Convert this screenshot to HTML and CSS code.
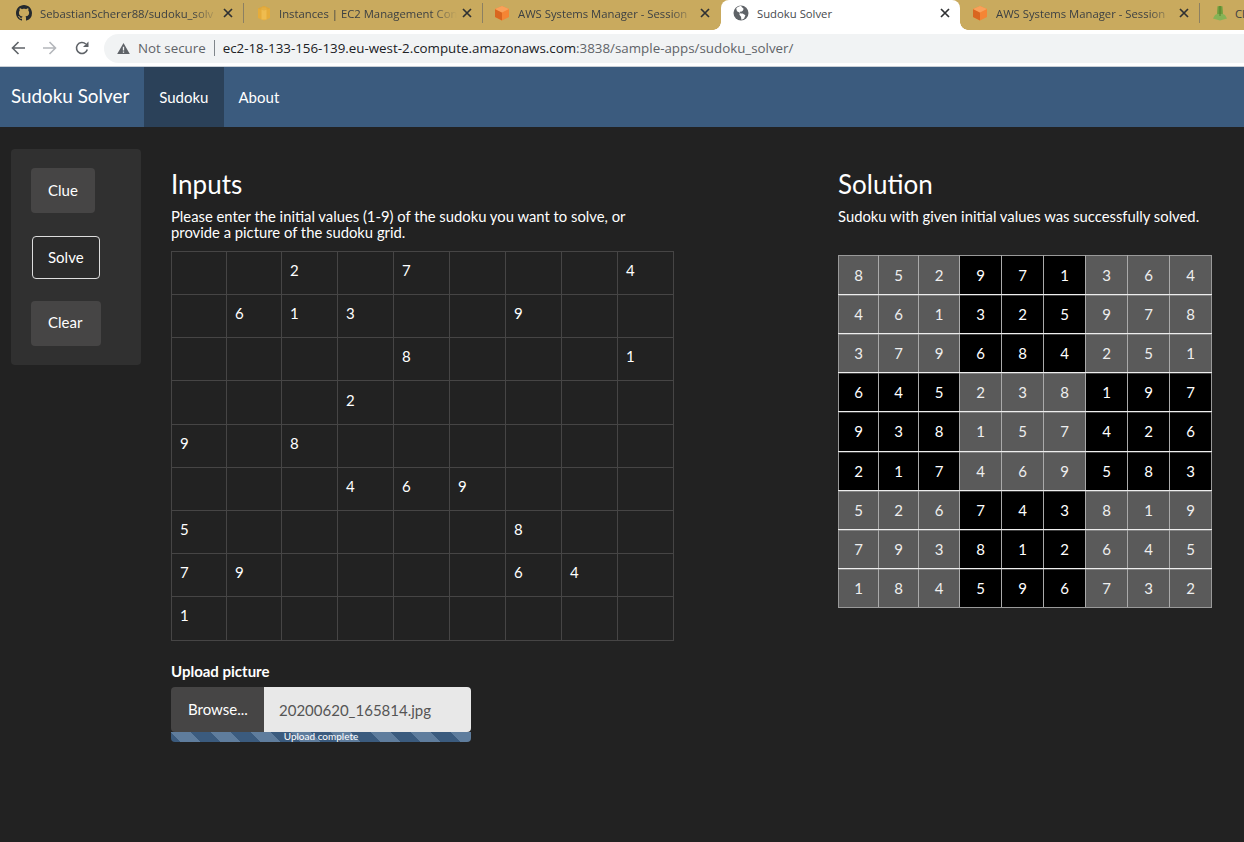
FILE: index.html
```html
<!DOCTYPE html>
<html lang="en">
<head>
    <meta charset="UTF-8">
    <title>Sudoku Solver</title>
    <link rel="stylesheet" href="styles.css">
</head>
<body>
    <div class="tabstrip">
        <div class="tab tab-first">
            <svg class="favicon" viewBox="0 0 16 16"><path fill="#24292e" d="M8 0C3.58 0 0 3.58 0 8c0 3.54 2.29 6.53 5.47 7.59.4.07.55-.17.55-.38 0-.19-.01-.82-.01-1.49-2.01.37-2.53-.49-2.69-.94-.09-.23-.48-.94-.82-1.13-.28-.15-.68-.52-.01-.53.63-.01 1.08.58 1.23.82.72 1.21 1.87.87 2.33.66.07-.52.28-.87.51-1.07-1.78-.2-3.64-.89-3.64-3.95 0-.87.31-1.59.82-2.15-.08-.2-.36-1.02.08-2.12 0 0 .67-.21 2.2.82.64-.18 1.32-.27 2-.27s1.36.09 2 .27c1.53-1.04 2.2-.82 2.2-.82.44 1.1.16 1.92.08 2.12.51.56.82 1.27.82 2.15 0 3.07-1.87 3.75-3.65 3.95.29.25.54.73.54 1.48 0 1.07-.01 1.93-.01 2.2 0 .21.15.46.55.38A8.01 8.01 0 0 0 16 8c0-4.42-3.58-8-8-8z"/></svg>
            <span class="tab-title">SebastianScherer88/sudoku_solv</span>
            <svg class="tab-close" viewBox="0 0 10 10"><path d="M1 1l8 8M9 1L1 9"/></svg>
        </div>
        <div class="tab tab-second">
            <svg class="favicon" viewBox="0 0 16 16"><path fill="#e6ac3a" d="M2 3.500 8 1l6 2.500V13l-6 2.500L2 13z"/><path fill="#efbc4f" d="M5.500 2.500h5v12h-5z"/><path fill="#d9a238" d="M2 3.500 8 5.500l6-2-6-2.500z" opacity=".5"/></svg>
            <span class="tab-title">Instances | EC2 Management Con</span>
            <svg class="tab-close" viewBox="0 0 10 10"><path d="M1 1l8 8M9 1L1 9"/></svg>
        </div>
        <div class="tab tab-before-active">
            <svg class="favicon" viewBox="0 0 16 16"><path fill="#f58534" d="M8 1 15 4v8l-7 3.500L1 12V4z"/><path fill="#d9661f" d="M8 7.500v8L1 12V4z"/><path fill="#f9a15a" d="M8 1 15 4 8 7.500 1 4z"/></svg>
            <span class="tab-title">AWS Systems Manager - Session</span>
            <svg class="tab-close" viewBox="0 0 10 10"><path d="M1 1l8 8M9 1L1 9"/></svg>
        </div>
        <div class="tab tab-active">
            <svg class="favicon" viewBox="0 0 16 16"><circle cx="8" cy="8" r="7.500" fill="#5f6368"/><path fill="#fff" d="M8 .8c-2 .4-3.600 1.300-4.800 2.800l.8 2.600 2.800 1.600-.4 2 1.600 2 .4 3c1-.1 2-.6 2.700-1.200l1.300-3.400-2.800-1.600-2.200-.2-.6-1.600 2-.4 1.200-.8.600-1.800L8.800 2z"/></svg>
            <span class="tab-title">Sudoku Solver</span>
            <svg class="tab-close" viewBox="0 0 10 10"><path d="M1 1l8 8M9 1L1 9"/></svg>
        </div>
        <div class="tab tab-after-active">
            <svg class="favicon" viewBox="0 0 16 16"><path fill="#f58534" d="M8 1 15 4v8l-7 3.500L1 12V4z"/><path fill="#d9661f" d="M8 7.500v8L1 12V4z"/><path fill="#f9a15a" d="M8 1 15 4 8 7.500 1 4z"/></svg>
            <span class="tab-title">AWS Systems Manager - Session</span>
            <svg class="tab-close" viewBox="0 0 10 10"><path d="M1 1l8 8M9 1L1 9"/></svg>
        </div>
        <div class="tab tab-last">
            <svg class="favicon" viewBox="0 0 16 16"><path fill="#6f9f3e" d="M5.500 1.500C6 .8 10 .8 10.500 1.500L11 11H5z"/><path fill="#86b356" d="M3 10l2-1h6l2 1 2 3.500-7 2-7-2z"/><path fill="#547f2c" d="M7 1h2v10H7z" opacity=".5"/></svg>
            <span class="tab-title tab-title-plain">Cl</span>
        </div>
    </div>

    <div class="toolbar">
        <svg class="tool-icon" viewBox="0 0 14 14"><path fill="none" stroke="#5f6368" stroke-width="1.600" d="M14 7H1.500M7.500 1 1.500 7l6 6"/></svg>
        <svg class="tool-icon" viewBox="0 0 14 14"><path fill="none" stroke="#b4b7bb" stroke-width="1.600" d="M0 7h12.500M6.500 1l6 6-6 6"/></svg>
        <svg class="tool-icon" viewBox="0 0 14 14"><path fill="none" stroke="#5f6368" stroke-width="1.600" d="M12.300 8.500A5.500 5.500 0 1 1 10.800 3"/><path fill="#5f6368" d="M13.500 .5V6H8z"/></svg>
        <div class="omnibox">
            <svg class="warn-icon" viewBox="0 0 14 14"><path fill="#5f6368" fill-rule="evenodd" d="M7 1 13.800 13H.2zM6.300 5.200v4h1.400v-4zm0 4.900v1.400h1.400v-1.400z"/></svg>
            <span class="not-secure">Not secure</span>
            <span class="omni-sep"></span>
            <span class="url">ec2-18-133-156-139.eu-west-2.compute.amazonaws.com<span class="url-rest">:3838/sample-apps/sudoku_solver/</span></span>
        </div>
    </div>

    <nav class="navbar">
        <a class="brand">Sudoku Solver</a>
        <a class="nav-item active">Sudoku</a>
        <a class="nav-item">About</a>
    </nav>

    <div class="page">
        <aside class="well">
            <button class="btn">Clue</button>
            <button class="btn btn-focus">Solve</button>
            <button class="btn btn-clear">Clear</button>
        </aside>

        <section class="inputs">
            <h3>Inputs</h3>
            <p class="lead">Please enter the initial values (1-9) of the sudoku you want to solve, or provide a picture of the sudoku grid.</p>
            <table class="grid">
                <colgroup><col class="c55"><col class="c55"><col class="c56"><col class="c56"><col class="c56"><col class="c56"><col class="c56"><col class="c56"><col class="c56"></colgroup>
                <tr><td></td><td></td><td>2</td><td></td><td>7</td><td></td><td></td><td></td><td>4</td></tr>
                <tr><td></td><td>6</td><td>1</td><td>3</td><td></td><td></td><td>9</td><td></td><td></td></tr>
                <tr><td></td><td></td><td></td><td></td><td>8</td><td></td><td></td><td></td><td>1</td></tr>
                <tr><td></td><td></td><td></td><td>2</td><td></td><td></td><td></td><td></td><td></td></tr>
                <tr><td>9</td><td></td><td>8</td><td></td><td></td><td></td><td></td><td></td><td></td></tr>
                <tr><td></td><td></td><td></td><td>4</td><td>6</td><td>9</td><td></td><td></td><td></td></tr>
                <tr><td>5</td><td></td><td></td><td></td><td></td><td></td><td>8</td><td></td><td></td></tr>
                <tr><td>7</td><td>9</td><td></td><td></td><td></td><td></td><td>6</td><td>4</td><td></td></tr>
                <tr><td>1</td><td></td><td></td><td></td><td></td><td></td><td></td><td></td><td></td></tr>
            </table>
            <label class="upload-label">Upload picture</label>
            <div class="file-input">
                <span class="browse">Browse...</span>
                <span class="file-name">20200620_165814.jpg</span>
            </div>
            <div class="progress"><span>Upload complete</span></div>
        </section>

        <section class="solution">
            <h3>Solution</h3>
            <p class="lead">Sudoku with given initial values was successfully solved.</p>
            <table class="solved">
                <colgroup><col class="s40"><col class="s40"><col class="s41"><col class="s42"><col class="s42"><col class="s42"><col class="s42"><col class="s42"><col class="s42"></colgroup>
                <tr><td class="g">8</td><td class="g">5</td><td class="g">2</td><td>9</td><td>7</td><td>1</td><td class="g">3</td><td class="g">6</td><td class="g">4</td></tr>
                <tr><td class="g">4</td><td class="g">6</td><td class="g">1</td><td>3</td><td>2</td><td>5</td><td class="g">9</td><td class="g">7</td><td class="g">8</td></tr>
                <tr><td class="g">3</td><td class="g">7</td><td class="g">9</td><td>6</td><td>8</td><td>4</td><td class="g">2</td><td class="g">5</td><td class="g">1</td></tr>
                <tr><td>6</td><td>4</td><td>5</td><td class="g">2</td><td class="g">3</td><td class="g">8</td><td>1</td><td>9</td><td>7</td></tr>
                <tr><td>9</td><td>3</td><td>8</td><td class="g">1</td><td class="g">5</td><td class="g">7</td><td>4</td><td>2</td><td>6</td></tr>
                <tr><td>2</td><td>1</td><td>7</td><td class="g">4</td><td class="g">6</td><td class="g">9</td><td>5</td><td>8</td><td>3</td></tr>
                <tr><td class="g">5</td><td class="g">2</td><td class="g">6</td><td>7</td><td>4</td><td>3</td><td class="g">8</td><td class="g">1</td><td class="g">9</td></tr>
                <tr><td class="g">7</td><td class="g">9</td><td class="g">3</td><td>8</td><td>1</td><td>2</td><td class="g">6</td><td class="g">4</td><td class="g">5</td></tr>
                <tr><td class="g">1</td><td class="g">8</td><td class="g">4</td><td>5</td><td>9</td><td>6</td><td class="g">7</td><td class="g">3</td><td class="g">2</td></tr>
            </table>
        </section>
    </div>
</body>
</html>
```

FILE: styles.css
```css
html, body {
    height: 100%;
}

body {
    margin: 0;
    height: 842px;
    overflow: hidden;
    background-color: #222;
    color: #fff;
    font-family: Lato, sans-serif;
    font-size: 15px;
}

/* browser chrome */
.tabstrip {
    display: flex;
    height: 30px;
    background-color: #c9aa5e;
    font-family: "Open Sans", sans-serif;
    font-size: 11.3px;
    color: #3c4043;
}

.tab {
    display: flex;
    align-items: center;
    flex: 0 0 239px;
    min-width: 0;
    box-sizing: border-box;
    height: 30px;
    padding: 0 8px 4px 12px;
    position: relative;
}

/* separator between two inactive tabs */
.tab::after {
    content: "";
    position: absolute;
    right: 0;
    top: 3px;
    width: 1px;
    height: 20px;
    background-color: #8c8062;
}

.tab-first {
    flex-basis: 244px;
    padding-left: 16px;
}

.tab-before-active {
    flex-basis: 238px;
    padding-left: 11px;
}

.tab-active {
    background-color: #fff;
    border-radius: 8px 8px 0 0;
    color: #45494d;
    padding-right: 7px;
}

.tab-after-active {
    flex-basis: 240px;
}

.tab-last {
    flex: 1 1 0;
    padding-right: 0;
}

.tab-before-active::after,
.tab-last::after {
    display: none;
}

/* flared bottom corners of the active tab */
.tab-active::before,
.tab-active::after {
    content: "";
    position: absolute;
    top: auto;
    bottom: 0;
    width: 8px;
    height: 8px;
    background-color: transparent;
}

.tab-active::before {
    left: -8px;
    background-image: radial-gradient(circle at 0 0, transparent 7.5px, #fff 8px);
}

.tab-active::after {
    right: -8px;
    background-image: radial-gradient(circle at 100% 0, transparent 7.5px, #fff 8px);
}

.favicon {
    flex: none;
    width: 16px;
    height: 16px;
    margin-right: 8px;
}

.tab-second .favicon,
.tab-last .favicon {
    margin-right: 7px;
}

.tab-title {
    flex: 1 1 0;
    min-width: 0;
    white-space: nowrap;
    -webkit-mask-image: linear-gradient(to right, #000 86%, transparent 100%);
    mask-image: linear-gradient(to right, #000 86%, transparent 100%);
}

.tab-active .tab-title,
.tab-title-plain {
    -webkit-mask-image: none;
    mask-image: none;
}

.tab-close {
    flex: none;
    width: 10px;
    height: 10px;
    margin: 0 3px 0 5px;
    fill: none;
    stroke: #2f3133;
    stroke-width: 1.700;
}

.toolbar {
    display: flex;
    align-items: center;
    height: 36px;
    box-sizing: content-box;
    background-color: #fff;
    border-bottom: 1px solid #c9cfd6;
    padding-left: 11px;
}

.tool-icon {
    flex: none;
    width: 14px;
    height: 14px;
    margin-right: 18px;
}

.omnibox {
    display: flex;
    align-items: center;
    flex: 1;
    height: 29px;
    margin-left: -3px;
    padding-left: 13px;
    background-color: #f1f3f4;
    border-radius: 15px 0 0 15px;
    font-family: "Open Sans", sans-serif;
    font-size: 13.35px;
}

.warn-icon {
    width: 13px;
    height: 13px;
    margin-right: 8px;
}

.not-secure {
    color: #5f6368;
}

.omni-sep {
    width: 1px;
    height: 16px;
    margin: 0 8px;
    background-color: #80868b;
}

.url {
    color: #202124;
    white-space: nowrap;
}

.url-rest {
    color: #5f6368;
}

/* navbar */
.navbar {
    display: flex;
    align-items: stretch;
    height: 60px;
    background-color: #3b5b7e;
}

.brand {
    padding: 0 15px 0 11px;
    font-size: 18.85px;
    line-height: 58px;
}

.nav-item {
    padding: 0 15px;
    font-size: 15px;
    line-height: 60px;
}

.nav-item.active {
    background-color: #2b4159;
}

/* page */
.page {
    display: flex;
    align-items: flex-start;
    padding: 22px 0 0 11px;
}

.well {
    display: flex;
    flex-direction: column;
    align-items: flex-start;
    box-sizing: border-box;
    flex: none;
    width: 130px;
    height: 216px;
    padding: 19px 20px;
    background-color: #303030;
    border-radius: 4px;
}

.btn {
    height: 45px;
    padding: 0 17px 2px;
    margin-bottom: 23px;
    background-color: #464545;
    border: none;
    border-radius: 4px;
    color: #fff;
    font-family: Lato, sans-serif;
    font-size: 15px;
}

.btn-focus {
    height: 43px;
    margin-left: 1px;
    margin-bottom: 21.500px;
    padding: 0 15px 2px;
    background-color: #2b2b2b;
    border: 1px solid #ddd;
}

.btn-clear {
    margin-bottom: 0;
    padding-right: 19px;
}

h3 {
    margin: 20px 0 0;
    font-size: 26px;
    font-weight: 400;
    line-height: 31px;
}

.lead {
    margin: 8px 0 0;
    font-size: 14.8px;
    line-height: 16px;
}

.inputs {
    flex: none;
    width: 503px;
    margin-left: 30px;
}

.inputs .lead {
    width: 480px;
}

table {
    border-collapse: collapse;
    table-layout: fixed;
}

.c55 { width: 55px; }
.c56 { width: 56px; }
.s40 { width: 40px; }
.s41 { width: 41px; }
.s42 { width: 42px; }

.grid {
    width: 502px;
    height: 389.500px;
    margin-top: 11px;
}

.grid td {
    padding: 0 0 6px 8px;
    border: 1px solid #464545;
    font-size: 15px;
    color: #fff;
}

.upload-label {
    display: block;
    margin-top: 21px;
    font-weight: 700;
    font-size: 15px;
    line-height: 18px;
}

.file-input {
    display: flex;
    width: 300px;
    height: 45px;
    margin-top: 7px;
}

.browse {
    flex: 0 0 93px;
    background-color: #464545;
    border-radius: 4px 0 0 4px;
    padding-left: 17px;
    box-sizing: border-box;
    line-height: 45px;
}

.file-name {
    flex: 1;
    background-color: #e8e8e8;
    border-radius: 0 4px 4px 0;
    color: #555;
    padding-left: 15px;
    line-height: 46px;
}

.progress {
    width: 300px;
    height: 10px;
    border-radius: 0 0 4px 4px;
    background-color: #3b5b7e;
    background-image: linear-gradient(45deg, #5f7d9d 25%, transparent 25%, transparent 50%, #5f7d9d 50%, #5f7d9d 75%, transparent 75%);
    background-size: 40px 40px;
    font-size: 10px;
    line-height: 8px;
    text-align: center;
}

.solution {
    flex: none;
    width: 374px;
    margin-left: 164px;
}

.solved {
    width: 373px;
    height: 353px;
    margin-top: 31px;
}

.solved td {
    padding: 0;
    background-color: #000;
    border-style: solid;
    border-color: #eee #aaa;
    border-width: 1px;
    box-shadow: inset 0 1px 0 rgba(255, 255, 255, 0.25);
    text-align: center;
    font-size: 15px;
    color: #fff;
}

.solved td.g {
    background-color: #5a5a5a;
    color: #eee;
}

.solved tr:first-child td {
    border-top-color: #999;
    box-shadow: none;
}

.solved tr:last-child td {
    border-bottom-color: #999;
}

.solved td:first-child {
    border-left-color: #999;
}

.solved td:last-child {
    border-right-color: #999;
}
```
